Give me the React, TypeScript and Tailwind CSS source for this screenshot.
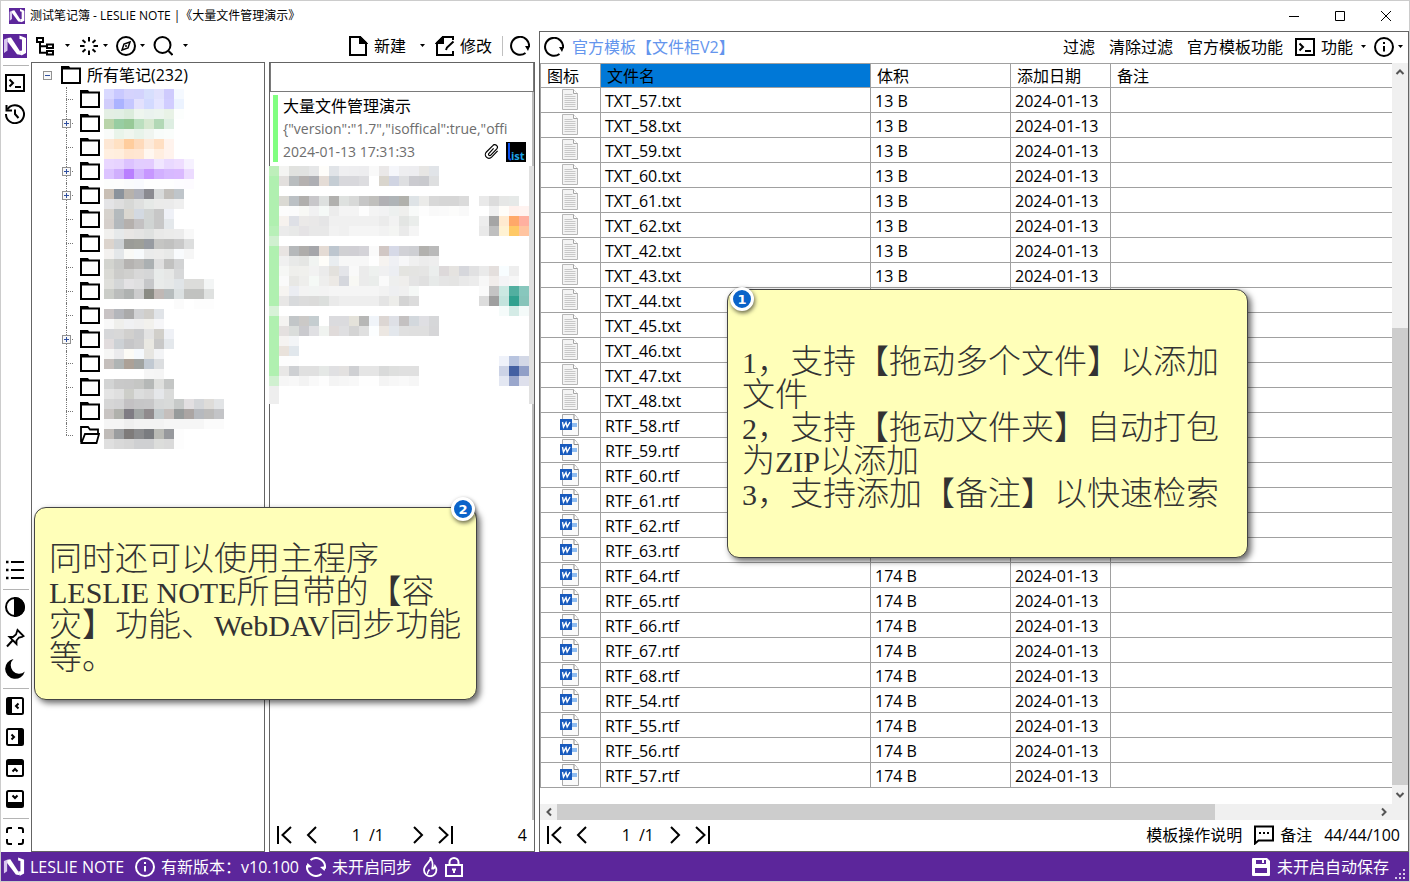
import React, { ReactNode, useState } from 'react';

interface FileRow {
  name: string;
  size?: string;
  date?: string;
}

// Список файлов шаблона
const files: FileRow[] = [
  ...[57, 58, 59, 60, 61, 62, 42, 43].map((id) => ({ name: `TXT_${id}.txt`, size: '13 B', date: '2024-01-13' })),
  ...[44, 45, 46, 47, 48].map((id) => ({ name: `TXT_${id}.txt` })),
  ...[58, 59, 60, 61, 62, 63].map((id) => ({ name: `RTF_${id}.rtf` })),
  ...[64, 65, 66, 67, 68, 54, 55, 56, 57].map((id) => ({ name: `RTF_${id}.rtf`, size: '174 B', date: '2024-01-13' })),
];

// Папки в дереве: какие из них можно раскрыть
const folders = Array.from({ length: 15 }, (_, i) => ({
  id: i,
  expandable: [1, 3, 4, 10].includes(i),
  open: i === 14,
}));

// Строки мозаики: цвета через пробел, "-" пустая клетка, "xN" повтор
const treeMosaic = [
  'd9d9ff c9c9ff d5d3fd d3d3fd d7dffd e1e1fd cfcbfd f5f9ff',
  'd1cdfb abb3ff c5c7ff e3e1fd d3daff e5e5ff d1cdff ecf3ff',
  'e4efe4 e2efe4 dcecdc eef5ee eaf2ee ecf4ee e8f2e6 fcfefd',
  'b9d4a9 98cda2 97c997 bbdfbf d6e8d0 b2d8b6 deeee2',
  'f9fbf9 e9f4ea f0f6ef e8f3ea f0f5f0 f8fcfa fafdfb',
  'fde7d4 ffe1c3 ffcd9d fedabb fdeada ffdfc3 fff3ed',
  'ffefe0 ffeedd ffe5cf ffe6d2 fff7f0 ffeee0 fff3ed',
  'e9d6ff e7d3ff dcc2ff e2cdff e3ccff f0e6ff e9d9ff eeddff f6f1ff',
  'dcc3ff d0affd b97fff d2b3ff c797ff d2b0ff d7b9ff dab9ff ecdbff',
  'fcfdfc fdfdfc fafbfc f9fafe fefefex3 fdfcff fdfbff',
  'c9bfb5 8b939c b7b2ac adafb8 8a8a90 d8dada c2bfbb bfc5ca',
  'e4e4e6 dedede d7d8d6 dfe0df e6e9e7 ebebea ebebeb efefef',
  'd6d2cd b4babd dad7d0 d3d9e1 d1d4d3 c7c7c7 eff1f7',
  'd5cfcb b3b8bc b5b0ad c3c1c2 d0d4d3 c7c7c7 e4e8eb',
  'f1f0ee e6e9ea e8e6e4 e4e4e3 dfe1e0 e9e9e8 ebebea ececec f8f8f8',
  'dcd4cd cdd1d4 9b9c98 9e9f99 979ba1 c5c5c3 c1c1c0 c9c9c9 dddede',
  'f3f1ef e4e7e9 f9f9f6 f7fafc eaebeb ececeb e8e9e8 f9fbfd f6f6f6',
  'd3d4cf c8c9c7 b5b3b1 bcbbb9 abb0b2 dfdfdf c1c1c0 d2d3d4',
  'dadad5 ccccca d0d0ce d8d8d8 d5d6d7 e8ebea e6e7e6 d7d8d9',
  'dfdfdb d4d6d7 e3e2e4 dfdfe0 c6c7c9 e9ebea e6e8e8 e0e4e7 dcdcdax2 f3f5f5',
  'cbcdc8 bbbdbc afb2b1 cccccd 8a8b84 c0b8b5 b6bcbd dbe0e1 c1c2c0x2 dfe1e0',
  '-x7 fbfbfb - fdfdfdx2',
  'c8c3c4 b4b6bb aaaaaa d1d2d4 d0ceca e1e4e8',
  'f8f8f8 efefec f0f1f3 efefef f2f1ed f6f6f8',
  'd6d7d9 d8d8d8 d1d0ce cacbcd e3e3e3 d1cfca eff1f6',
  'e1dcdd cdd1d5 c6c6c8 cccccd e9e8e2 c8c8c8 e4e8ec',
  'f6f6f5 ebebed fcfbf6 f5f9fd e7e6e2 f3f4f6',
  'c5bfbc afb4b4 aca197 a0a3a1 c1c9d2 dcdee0',
  '-x4 f6f6f6 f5f5f5',
  'd3d4d4 c9c9c9 c8c8c8 c5c6c4 b5b8b7 dedfdd c4c6c5',
  'e4e4e4 dfdfdf cdcec9 dcdddd d8d8d8 e5e7ea dadbda',
  'd6d6d6 d3d3d4 c3c1c3 c6c6c7 c7c7c8 d6d8d8 d8dad9 c7cac9 e2dfe1 d4d6d9 dedcd9 e2e4e6',
  'c8c4c2 b0b1ac 7f7c83 a1a5a4 908b8d c3cacc c5bfbc 979b9b aba5a3 b6b9be bcbbba c3c4c7',
  'f5f5f5x2 efefef f3f3f3x3 f6f6f6x4 fbfbfbx2',
  'bfbbb8 9b9d9f 7e7b7a 8a8b8d 7a7c80 b9bab5 97999d fdfdfd',
  'dfdfdf d9d9d9 d6d6d6 cfd0d2x2 dcdddb dadada fdfdfd',
];

const listMosaic = [
  'beefbb f4f4f2 e1e2df e1e2e1 e6e7e8 fefdfa e1e4e8 efeff1 eeeef0 ededef f9f9f9 eae8e8 f5f6fa eeeef0 ededf0 e7e6e4 e1e4e8',
  'b0f0b0 e2dfdd b9bdbf b5b1b0 aeafb4 e4dcd6 c5cdd4 d8d8dcx2 dddde0 - d9d5cd d0d4e2 dedfe1 cbcbd0 c9cace dedfe0',
  'b0f0b0',
  'b0f0b0 dad9d3 bbc0c4 b1afad c8c7ca dde0df b1b0ae dee1df d8d9d8 c6c6c6 c0bfbc b1b0b4 afb4b7 b1b1ac dee3e6 ebebe9 d8d8d8 d6d6d6x2 dbdbdb - e9e9e9 dcdcdc e6e7e6 e6e9e8',
  'b0f0b0 fcfcfc fbfbfb f8f8f5 f1f1f2 f5f9f7 ececec f4f4f4x2 fdfdfd f4f4f4 f2f2f3 edf0ef efefed f8faf9 fdfdfd f9f9f9 fafafa fcfcfb f9f9f9 -x2 f0f0f0 fffdf9 fff1ed fff3f0',
  'b0f0b0 f6f2ee dee0e6 ebe9e8 e9e8e8 e5e5e6 f0f0f0x5 ebebeb f2f2f2 e3e5e3 eaedeb -x6 ededed a5a5a5 ffead0 ffa869 ffb0a0',
  'b8f0b8 ebebeb e8e9e8 e5e3e5 e8e8e8x2 f2f2f2 f0f0f0 f5f5f5x3 f2f2f2 f4f5f3 eaeaea f5f5f5 -x6 e9e9e9 bfbfbf fff2d3 ffc966 ffc4a0',
  'd0f0d0',
  'b0f0b0 e8e4e2 b5b8ba afadab a5a6aa e4dbd4 bdc6cf d0d0d3 d0cfd4 d4d3d8 fafafa d1c7c4 d6d9e7 d1d1d6 cecfd3 b2b1ae bababa',
  'b0f0b0 f0f0f0 e8e9e8 e5e6e4 f1f4f2 fefdf9 e9edf0 f7f7f7x3 fefefe f6f3f0 eff0f4 f7f7f8 f0f0f0 ececec eeeeee',
  'b0f0b0 f6f7f5 efefec f0f0ed f2f2f2 ebebeb e3e1dd e4e5e9 f9f9f9 ebebeb eef1ef f0f0f1 eceef2 e4e4e0 e4e4e2 e5e5e4 ebeeed ddd9da e5e3e0 d6d7dc e1e1e2 eaeaea e4dfdd f8fdff eeeeee',
  'b0f0b0 fafafa e8e8e5 eeeeec f5f9f6 eeeeed ece9e5 d5d7dd f8f8f4 ebebeb eaedeb fafafa eeefee efeeec e4e4e4 e0e0e0 e7eae9 e5e5e5 e4e4e3 e9e9e9 ececec f7f7f7 f1edeb f4f4f6 f7f7f7',
  'b0f0b0 f6f4f1 ebedf2 f3f3f3 f2f4f3 f3f3f3 f5f5f5x5 f2f2f2 eeeff1 f0f0f0 f5f8f6 -x6 fafafa c4c4c4 cbe8e2 52afa0 88c7bd',
  'b0f0b0 e8e7e6 d8dadc dcdcdc dbdbda dcdfdd eaeaea eeeeeex4 e4e4e4 ededea d4d4d4 dcdcdc -x6 dcdcdc 9f9f9f c3e3dd 31a18f 87c4ba',
  'd8f2d8 -x22 f5fbfa d4ebe6 f4faf9',
  'b0f0b0 f4f3f1 c2c6c8 cbc9c7 c5cdd0 - dbdbdex2 e4e2da b7b7b6 f0f4f9 dcd6d3 dee0e6 c4c1c1 d3d8dd dfdfe3 d6d7d9',
  'b0f0b0 e4e0df dadddb cacace e0e0e3 f0f3f0 e0dbda dfdfe1 d4d4d4 e0e0e0 fcfeff ece7e2 e3e7ec e0e0e0 dfdfdfx2 d6d6d8',
  'b0f0b0 f5f3f1 f3f5f7',
  'b0f0b0 e9e2db e1e7ec',
  'b0f0b0 fdfdfdx2 -x20 eff2fa b8c4df d3d8e6',
  'b0f0b0 e8e7e6 ced0d3 e0e0e0x2 e5e8e6 e0e0e2 e3e1e0 cfd0d3 e5e5e5x2 d9dada dedfde e0e0e0x2 -x8 ccd3e6 4360a2 919fc7',
  'd0f0d0 f6f6f6 f8f8f8 f3f3f3 f9f9f9 fdfdfd f4f4f4 f6f6f6 f8f8f8 fefefex2 f4f4f4 f7f7f7 f9f9f9 f6f6f6 -x8 e3e7f2 9aa7cc dee0ec',
  'eeeeee',
  'eeeeee',
];

const expandRow = (row: string) =>
  row.split(' ').flatMap((token) => {
    const [color, count] = token.split('x');
    return Array(Number(count || 1)).fill(color) as string[];
  });

const Mosaic: React.FC<{ rows: string[]; cols: number }> = ({ rows, cols }) => (
  <svg width={cols * 10} height={rows.length * 10} shapeRendering="crispEdges" aria-hidden="true">
    {rows.map((row, y) =>
      expandRow(row).map((color, x) =>
        color === '-' ? null : (
          <rect key={`${x}-${y}`} x={x * 10} y={y * 10} width="10" height="10" fill={`#${color}`} />
        )
      )
    )}
  </svg>
);

// Базовая обёртка для контурных иконок 20x20
const Svg: React.FC<{ children: ReactNode; size?: number }> = ({ children, size = 20 }) => (
  <svg
    width={size}
    height={size}
    viewBox="0 0 20 20"
    fill="none"
    stroke="currentColor"
    strokeWidth="2"
    className="shrink-0"
    aria-hidden="true"
  >
    {children}
  </svg>
);

const Logo: React.FC<{ size: number; plain?: boolean }> = ({ size, plain }) => (
  <svg width={size} height={size} viewBox="0 0 24 24" className="shrink-0" aria-hidden="true">
    {!plain && <rect width="24" height="24" fill="#5c269b" />}
    <path d="M1 5.500 4.500 4v12.500L1 19z" fill="#d9c8ee" />
    <path d="M4.500 4 8 3.500l8.500 13 2 4.500-4.500-.8L4.500 7.500z" fill="#fff" />
    <path d="M16.500 1.500 23 4v15l-4.500 2.500-2-4.500 2.500-.5V5.500l-2.500-.5z" fill="#fff" />
  </svg>
);

const TreeIcon = () => (
  <Svg>
    <path d="M2 2h6v4H2zM12 8.500h6v3.500h-6zM12 15h6v3.500h-6zM5 6v10.800h7M5 10.300h7" />
  </Svg>
);

const SparkIcon = () => (
  <Svg>
    <path d="M10 1v4.500M10 14.500V19M1 10h4.500M14.500 10H19M3.500 4l3 2.700M16.500 4l-3 2.700M3.500 16l3-2.700M16.500 16l-3-2.700" />
  </Svg>
);

const CompassIcon = () => (
  <Svg>
    <circle cx="10" cy="10" r="9" />
    <path d="M14 6 12 12 6 14 8 8z" strokeWidth="1.500" />
    <circle cx="10" cy="10" r="1" fill="currentColor" stroke="none" />
  </Svg>
);

const SearchIcon = () => (
  <Svg>
    <circle cx="9.500" cy="9" r="8" />
    <path d="M15.500 15l4 4" />
  </Svg>
);

const NewDocIcon = () => (
  <Svg>
    <path d="M2 1h10l6 6v12H2z" />
    <path d="M12 1v6h6z" fill="currentColor" />
  </Svg>
);

const EditDocIcon = () => (
  <Svg>
    <path d="M18 4V1H8L2 7v12h16v-4" />
    <path d="M8 1v6H2z" fill="currentColor" />
    <path d="M11 14l1-2.500L18.500 5.500" />
  </Svg>
);

const RefreshIcon = () => (
  <Svg>
    <path d="M15.500 17A9 9 0 1 1 19 11" />
    <path d="M15 10h5l-2 5z" fill="currentColor" stroke="none" />
  </Svg>
);

const TerminalIcon = () => (
  <Svg>
    <path d="M1 2h18v16H1z" />
    <path d="M4.500 6.500 8 10l-3.500 3.500M10 14h6" />
  </Svg>
);

const HistoryIcon = () => (
  <Svg>
    <path d="M2.300 5.500A9 9 0 1 1 1 10" />
    <path d="M1.500 1v5.500H7M10 5.500V10l3.500 4" />
  </Svg>
);

const InfoIcon = () => (
  <Svg>
    <circle cx="10" cy="10" r="9" />
    <path d="M10 9v5.500M10 5v2" />
  </Svg>
);

const ListIcon = () => (
  <Svg>
    <path d="M6 2h13M6 10h13M6 18h13" />
    <path d="M1 2h2.500M1 10h2.500M1 18h2.500" strokeWidth="2.500" />
  </Svg>
);

const ContrastIcon = () => (
  <Svg>
    <circle cx="10" cy="10" r="9" />
    <path d="M10 1a9 9 0 0 1 0 18z" fill="currentColor" />
  </Svg>
);

const PinIcon = () => (
  <Svg>
    <path d="M12.500 2 18.500 8l-1.500.8-3 .7-2.500 3v3.500L4.500 9H8l3-2.500z" strokeWidth="1.800" />
    <path d="M7.500 12.500 2 18.500" />
  </Svg>
);

const MoonIcon = () => (
  <Svg>
    <path d="M8.500 0a10 10 0 1 0 11.300 12.500A8.300 8.300 0 0 1 8.500 0z" fill="currentColor" stroke="none" />
  </Svg>
);

// Иконка скрытия панели: закрашенная сторона и стрелка
const PanelIcon: React.FC<{ bar: string; arrow: string }> = ({ bar, arrow }) => (
  <Svg>
    <rect x="2" y="2" width="16" height="16" rx="1.500" />
    <path d={bar} fill="currentColor" stroke="none" />
    <path d={arrow} />
  </Svg>
);

const FullscreenIcon = () => (
  <Svg>
    <path d="M2 7V4q0-2 2-2h3M13 2h3q2 0 2 2v3M18 13v3q0 2-2 2h-3M7 18H4q-2 0-2-2v-3" />
  </Svg>
);

const SyncIcon = () => (
  <Svg>
    <path d="M15.500 17A9 9 0 0 1 1.100 8.500M4.500 3A9 9 0 0 1 18.900 11.500" />
    <path d="M0 11l1.500-5L6 10zM20 9l-1.500 5L14 10z" fill="currentColor" stroke="none" />
  </Svg>
);

const FlameIcon = () => (
  <Svg>
    <path d="M10.500 1c.5 3.500-6.500 7-6.500 12a6.200 6.200 0 0 0 12.400 0c0-1.800-.6-3-1.400-4-.5 2-2 2.800-2.800 2.600C13 8 12.500 3 10.500 1z" strokeWidth="1.800" />
    <path d="M7.500 17.500c-.5-2.500 1-3.500 2-5" strokeWidth="1.500" />
  </Svg>
);

const LockIcon = () => (
  <Svg>
    <path d="M2 8h16v11H2zM5.500 8V5.500a4.500 4.500 0 0 1 9 0V8" />
    <path d="M8 11.500h4v2h-1V16H9v-2.500H8z" fill="currentColor" stroke="none" />
  </Svg>
);

const SaveIcon = () => (
  <Svg>
    <path d="M1 2q0-1 1-1h14l3 3v14q0 1-1 1H2q-1 0-1-1z" fill="currentColor" stroke="none" />
    <path d="M5 3h10v4H5zM4 11h12v5H4z" fill="#5c269b" stroke="none" />
    <path d="M11 3h2v3h-2z" fill="#fff" stroke="none" />
  </Svg>
);

const CommentIcon = () => (
  <Svg>
    <path d="M1 1.500h18v14H4.500L1 18.500z" />
    <path d="M5 8h2M9 8h2M13 8h2" />
  </Svg>
);

const FolderIcon: React.FC<{ open?: boolean }> = ({ open }) => (
  <Svg>
    {open ? (
      <path d="M1 17.500V2h7l2 2.500h8V8M1.500 18 5 9h14l-2.500 9z" strokeWidth="1.800" />
    ) : (
      <>
        <path d="M1 3.500h18V18H1z" />
        <path d="M0 1h8l2 3H0z" fill="currentColor" stroke="none" />
      </>
    )}
  </Svg>
);

const ClipIcon = () => (
  <Svg size={16}>
    <path
      d="M17 8.500l-7.500 8A4.500 4.500 0 0 1 3 10l8-8a3 3 0 0 1 5 4l-7.500 8a1.500 1.500 0 0 1-2.500-2l6-6.500"
      strokeWidth="1.500"
    />
  </Svg>
);

const TxtFileIcon = () => (
  <svg width="16" height="22" viewBox="0 0 16 22" className="mx-auto" aria-hidden="true">
    <path d="M.5 1.500h11l4 4v16h-15z" fill="#f4f4f4" stroke="#b8b8b8" />
    <path d="M11.500 1.500v4h4" fill="#fff" stroke="#a5a5a5" />
    <path d="M2.500 6.500h8M2.500 8.500h11M2.500 10.500h11M2.500 12.500h11M2.500 14.500h11M2.500 16.500h11M2.500 18.500h11" stroke="#c8c8c8" />
  </svg>
);

const RtfFileIcon = () => (
  <svg width="20" height="23" viewBox="0 0 20 23" className="mx-auto" aria-hidden="true">
    <path d="M2.500 1.500h12l4 5v16h-16z" fill="#fafafa" stroke="#a8a8a8" />
    <path d="M14 1.500v5h4.500" fill="#fff" stroke="#8c8c8c" />
    <path d="M12 10h5v4h-5z" fill="#8fbcf0" />
    <path d="M0 6h12v11H0z" fill="#185abd" />
    <path d="M2.500 9l1 5L6 9.500 7.200 14l2.800-5" fill="none" stroke="#fff" strokeWidth="1.400" />
  </svg>
);

const Caret = () => (
  <svg width="5" height="3" viewBox="0 0 5 3" className="shrink-0" aria-hidden="true">
    <path d="M0 0h5L2.500 3z" fill="currentColor" />
  </svg>
);

const Arrow: React.FC<{ d: string }> = ({ d }) => (
  <svg width="16" height="20" viewBox="0 0 16 20" fill="none" stroke="currentColor" strokeWidth="2" aria-hidden="true">
    <path d={d} />
  </svg>
);

const SmallArrow: React.FC<{ d: string }> = ({ d }) => (
  <svg width="10" height="10" viewBox="0 0 10 10" fill="none" stroke="#555" strokeWidth="2" aria-hidden="true">
    <path d={d} />
  </svg>
);

const SideButton: React.FC<{ label: string; children: ReactNode }> = ({ label, children }) => (
  <button type="button" aria-label={label} className="flex h-[31px] w-full items-center justify-center pr-[2px] pb-[2px]">
    {children}
  </button>
);

const SideDivider = () => (
  <div className="flex h-[6px] items-center px-[2px]">
    <div className="h-px w-full bg-[#b4b4b4]" />
  </div>
);

const Pager: React.FC<{ id: string; totalClass: string; children: ReactNode }> = ({ id, totalClass, children }) => {
  const [page, setPage] = useState('1');

  return (
    <div className="flex h-[31px] shrink-0 items-center pb-[2px] pl-[6px]">
      <button type="button" aria-label="首页">
        <Arrow d="M2 1v18M15 2 6.500 10 15 18" />
      </button>
      <button type="button" aria-label="上一页" className="ml-3">
        <Arrow d="M12 2 4 10l8 8" />
      </button>
      <input
        id={id}
        aria-label="页码"
        value={page}
        onChange={(e) => setPage(e.target.value)}
        className="ml-4 w-[25px] bg-transparent text-right outline-none"
      />
      <span className={totalClass}>/1</span>
      <button type="button" aria-label="下一页">
        <Arrow d="M4 2l8 8-8 8" />
      </button>
      <button type="button" aria-label="末页" className="ml-3">
        <Arrow d="M1 2 9.500 10 1 18M14 1v18" />
      </button>
      {children}
    </div>
  );
};

const Expander: React.FC<{ expanded?: boolean }> = ({ expanded }) => (
  <button type="button" aria-label={expanded ? '折叠' : '展开'} className="block bg-white">
    <svg width="9" height="9" viewBox="0 0 9 9" fill="none" className="block" aria-hidden="true">
      <rect x=".5" y=".5" width="8" height="8" fill="#f8f8f8" stroke="#919191" />
      <path d={expanded ? 'M2 4.500h5' : 'M2 4.500h5M4.500 2v5'} stroke="#3050a0" />
    </svg>
  </button>
);

// Жёлтая выноска с номером
const Callout: React.FC<{ className: string; badgeClass: string; number: number; lines: ReactNode[] }> = ({
  className,
  badgeClass,
  number,
  lines,
}) => (
  <aside
    className={`absolute z-10 flex items-center rounded-[12px] border border-[#444] bg-[#ffffb9] px-[14px] pt-[10px] font-['Liberation_Serif','Noto_Sans_CJK_SC',serif] text-[33px] leading-[33px] font-light text-[#333] shadow-[3px_3px_6px_rgba(0,0,0,0.6)] ${className}`}
  >
    <span
      className={`absolute flex size-6 items-center justify-center rounded-full border-[3px] border-white bg-[#0a63c9] font-['DejaVu_Sans',sans-serif] text-[13px] leading-none font-bold text-white shadow-[1px_2px_4px_rgba(0,0,0,0.6)] ${badgeClass}`}
    >
      {number}
    </span>
    <div className="whitespace-nowrap">
      {lines.map((line, i) => (
        <p key={i} className="h-[33px]">{line}</p>
      ))}
    </div>
  </aside>
);

const Latin: React.FC<{ children: ReactNode }> = ({ children }) => (
  <span className="text-[30px] leading-none">{children}</span>
);

const Sidebar = () => (
  <nav className="flex w-[30px] shrink-0 flex-col">
    <SideButton label="主菜单">
      <Logo size={24} />
    </SideButton>
    <SideDivider />
    <SideButton label="终端"><TerminalIcon /></SideButton>
    <SideButton label="历史"><HistoryIcon /></SideButton>
    <div className="flex-1" />
    <SideButton label="列表"><ListIcon /></SideButton>
    <SideDivider />
    <SideButton label="对比度"><ContrastIcon /></SideButton>
    <SideButton label="置顶"><PinIcon /></SideButton>
    <SideButton label="夜间模式"><MoonIcon /></SideButton>
    <SideDivider />
    <SideButton label="左侧面板"><PanelIcon bar="M2 2h5v16H2z" arrow="M13.500 7.500 11 10l2.500 2.500" /></SideButton>
    <SideButton label="右侧面板"><PanelIcon bar="M13 2h5v16h-5z" arrow="M6.500 7.500 9 10l-2.500 2.500" /></SideButton>
    <SideButton label="顶部面板"><PanelIcon bar="M2 2h16v5H2z" arrow="M7.500 13.500 10 11l2.500 2.500" /></SideButton>
    <SideButton label="底部面板"><PanelIcon bar="M2 13h16v5H2z" arrow="M7.500 6.500 10 9l2.500-2.500" /></SideButton>
    <SideDivider />
    <SideButton label="全屏"><FullscreenIcon /></SideButton>
  </nav>
);

const NotesToolbar = () => (
  <div className="flex h-[31px] shrink-0 items-center pr-[5px] pb-[2px] pl-1">
    <button type="button" aria-label="目录" className="flex items-center gap-[10px]"><TreeIcon /><Caret /></button>
    <button type="button" aria-label="工具" className="ml-[9px] flex items-center gap-1"><SparkIcon /><Caret /></button>
    <button type="button" aria-label="导航" className="ml-2 flex items-center gap-1"><CompassIcon /><Caret /></button>
    <button type="button" aria-label="搜索" className="ml-2 flex items-center gap-[10px]"><SearchIcon /><Caret /></button>
    <button type="button" className="ml-auto flex items-center gap-[6px]"><NewDocIcon />新建</button>
    <button type="button" aria-label="新建选项" className="ml-[14px] flex h-5 items-center"><Caret /></button>
    <button type="button" className="ml-[10px] flex items-center gap-[5px]"><EditDocIcon />修改</button>
    <div className="ml-[10px] h-5 w-px bg-[#c0c0c0]" />
    <button type="button" aria-label="刷新" className="ml-[7px]"><RefreshIcon /></button>
  </div>
);

const TreePanel = () => (
  <div className="relative w-[234px] shrink-0 border border-[#646464]">
    <div className="flex h-6 items-center pl-[11px]">
      <Expander expanded />
      <span className="ml-[9px]"><FolderIcon /></span>
      <span className="ml-[6px]">所有笔记(232)</span>
    </div>
    <ul>
      {folders.map((folder) => (
        <li key={folder.id} className="relative flex h-6 items-center pl-12">
          <span
            className={`absolute top-0 left-[34px] border-l border-dotted border-[#777] ${folder.open ? 'h-3' : 'h-6'}`}
          />
          <span className="absolute top-3 left-[34px] w-[7px] border-t border-dotted border-[#777]" />
          {folder.expandable && (
            <span className="absolute top-2 left-[30px]"><Expander /></span>
          )}
          <FolderIcon open={folder.open} />
        </li>
      ))}
    </ul>
    <div className="absolute top-[26px] left-[72px]">
      <Mosaic rows={treeMosaic} cols={12} />
    </div>
  </div>
);

const NoteList = () => (
  <div className="flex w-[266px] shrink-0 flex-col border border-[#646464]">
    <input
      aria-label="搜索笔记"
      className="h-[29px] w-full shrink-0 border border-t-0 border-[#7a7a7a] px-2 outline-none"
    />
    <div className="relative flex-1 border-r-2 border-[#bdbdbd]">
      <article className="mx-[3px] mt-[3px] flex h-[67px] border-l-[5px] border-[#80ff80] pl-[5px]">
        <div className="min-w-0 flex-1">
          <h2 className="h-[22px] leading-[22px]">大量文件管理演示</h2>
          <p className="h-6 overflow-hidden text-sm leading-6 whitespace-nowrap text-[#6d6d6d]">
            {'{"version":"1.7","isoffical":true,"offi'}
          </p>
          <div className="flex h-[21px] items-center text-sm text-[#6d6d6d]">
            <time className="flex-1">2024-01-13 17:31:33</time>
            <span className="text-black"><ClipIcon /></span>
            <svg width="20" height="20" viewBox="0 0 20 20" className="mr-[3px] ml-[6px]" aria-hidden="true">
              <rect width="20" height="20" fill="#000" />
              <path d="M3 1v15q0 1.500 2 1.500" fill="none" stroke="#0a50f0" strokeWidth="2" />
              <text x="5" y="18" fontSize="11" fontWeight="bold" fontFamily="Open Sans" fill="#1fa5e8">ist</text>
            </svg>
          </div>
        </div>
      </article>
      <div className="absolute top-[74px] -left-px flex h-[238px] w-[265px] overflow-hidden bg-white">
        <Mosaic rows={listMosaic} cols={26} />
        <div className="flex-1 bg-[#e1e1e1]" />
      </div>
    </div>
    <Pager id="notes-page" totalClass="ml-2 w-[41px]">
      <span className="ml-auto pr-[7px]">4</span>
    </Pager>
  </div>
);

const cellClass = 'h-[25px] border-r border-b border-[#a0a0a0] p-0 pt-[2px] pl-1 leading-[22px]';
const headClass =
  'h-[25px] border-t border-r border-b border-[#a0a0a0] p-0 pt-[2px] pl-[6px] text-left leading-[21px] font-normal';

const FileTable = () => (
  <table className="w-full table-fixed border-separate border-spacing-0 border-l border-[#a0a0a0]">
    <colgroup>
      <col className="w-[60px]" />
      <col className="w-[270px]" />
      <col className="w-[140px]" />
      <col className="w-[100px]" />
      <col />
    </colgroup>
    <thead>
      <tr>
        <th className={headClass}>图标</th>
        <th className={`${headClass} bg-[#0078d7]`}>文件名</th>
        <th className={headClass}>体积</th>
        <th className={headClass}>添加日期</th>
        <th className={`${headClass} border-r-0`}>备注</th>
      </tr>
    </thead>
    <tbody>
      {files.map((file) => (
        <tr key={file.name}>
          <td className="h-[25px] border-r border-b border-[#a0a0a0] p-0 pr-px align-top">
            {file.name.endsWith('.txt') ? <TxtFileIcon /> : <RtfFileIcon />}
          </td>
          <td className={cellClass}>{file.name}</td>
          <td className={cellClass}>{file.size}</td>
          <td className={cellClass}>{file.date}</td>
          <td className={`${cellClass} border-r-0`} />
        </tr>
      ))}
    </tbody>
  </table>
);

const FilePanel = () => (
  <section className="flex min-w-0 flex-1 flex-col border border-[#646464]">
    <div className="flex h-[31px] shrink-0 items-center pr-[5px] pb-[2px] pl-1">
      <button type="button" aria-label="刷新"><RefreshIcon /></button>
      <h1 className="ml-2 flex-1 text-[#6495ed]">官方模板【文件柜V2】</h1>
      <button type="button">过滤</button>
      <button type="button" className="ml-[14px]">清除过滤</button>
      <button type="button" className="ml-[14px]">官方模板功能</button>
      <button type="button" className="ml-3 flex items-center gap-[6px]"><TerminalIcon />功能</button>
      <button type="button" aria-label="功能选项" className="ml-2 flex h-5 items-center"><Caret /></button>
      <button type="button" aria-label="信息" className="ml-2 flex items-center gap-1"><InfoIcon /><Caret /></button>
    </div>
    <div className="flex min-h-0 flex-1">
      <div className="min-w-0 flex-1 overflow-hidden">
        <FileTable />
      </div>
      <div className="flex w-4 shrink-0 flex-col items-center bg-[#f0f0f0]">
        <div className="flex h-[17px] items-center"><SmallArrow d="M1.500 7 5 3.500 8.500 7" /></div>
        <div className="grow-[248]" />
        <div className="w-full grow-[457] bg-[#cdcdcd]" />
        <div className="flex h-[19px] items-center"><SmallArrow d="M1.500 3 5 6.500 8.500 3" /></div>
      </div>
    </div>
    <div className="flex h-4 shrink-0 bg-[#f0f0f0] pr-4">
      <div className="flex w-[17px] items-center justify-center"><SmallArrow d="M7 1.500 3.500 5 7 8.500" /></div>
      <div className="grow-[658] bg-[#cdcdcd]" />
      <div className="grow-[160]" />
      <div className="flex w-[17px] items-center justify-center"><SmallArrow d="M3 1.500 6.500 5 3 8.500" /></div>
    </div>
    <Pager id="files-page" totalClass="ml-2 w-7">
      <a href="#help" className="ml-auto">模板操作说明</a>
      <button type="button" className="ml-3 flex items-center gap-[6px]"><CommentIcon />备注</button>
      <span className="ml-3 pr-2">44/44/100</span>
    </Pager>
  </section>
);

const App: React.FC = () => {
  return (
    <div className="relative flex h-screen flex-col overflow-hidden border border-[#ccc] bg-white font-['Open_Sans','Noto_Sans_CJK_SC',sans-serif] text-base leading-6 text-black">
      <header className="flex h-[30px] shrink-0 items-center pl-2 text-xs">
        <Logo size={16} />
        <span className="ml-[5px] flex-1">测试笔记簿 - LESLIE NOTE |《大量文件管理演示》</span>
        <button type="button" aria-label="最小化" className="flex w-[46px] justify-center">
          <svg width="10" height="10" stroke="#000" fill="none"><path d="M0 5.500h10" /></svg>
        </button>
        <button type="button" aria-label="最大化" className="flex w-[46px] justify-center">
          <svg width="10" height="10" stroke="#000" fill="none"><path d="M.5.5h9v9h-9z" /></svg>
        </button>
        <button type="button" aria-label="关闭" className="flex w-[46px] justify-center">
          <svg width="10" height="10" stroke="#000" fill="none"><path d="M0 0l10 10M10 0 0 10" /></svg>
        </button>
      </header>

      <main className="flex min-h-0 flex-1">
        <Sidebar />
        <div className="mr-1 flex shrink-0 flex-col">
          <NotesToolbar />
          <div className="flex min-h-0 flex-1 gap-1">
            <TreePanel />
            <NoteList />
          </div>
        </div>
        <FilePanel />
      </main>

      {/* Строка состояния */}
      <footer className="flex h-[29px] shrink-0 items-center bg-[#5c269b] pl-[2px] text-white">
        <Logo size={22} plain />
        <span className="ml-[5px]">LESLIE NOTE</span>
        <button type="button" className="ml-[11px] flex items-center gap-[6px]"><InfoIcon />有新版本：v10.100</button>
        <button type="button" className="ml-[7px] flex items-center gap-[6px]"><SyncIcon />未开启同步</button>
        <button type="button" aria-label="热度" className="ml-2"><FlameIcon /></button>
        <button type="button" aria-label="锁定" className="ml-1"><LockIcon /></button>
        <button type="button" className="ml-auto flex items-center gap-[6px]"><SaveIcon />未开启自动保存</button>
        <svg width="12" height="12" viewBox="0 0 12 12" className="mr-[2px] ml-[6px] self-end" fill="#d8cbe8" aria-hidden="true">
          <path d="M8 0h2v2H8zM4 4h2v2H4zM8 4h2v2H8zM0 8h2v2H0zM4 8h2v2H4zM8 8h2v2H8z" />
        </svg>
      </footer>

      <Callout
        number={1}
        className="top-[288px] left-[726px] h-[269px] w-[521px]"
        badgeClass="-top-[3px] left-[2px]"
        lines={[
          <><Latin>1</Latin>，支持【拖动多个文件】以添加</>,
          '文件',
          <><Latin>2</Latin>，支持【拖动文件夹】自动打包</>,
          <>为<Latin>ZIP</Latin>以添加</>,
          <><Latin>3</Latin>，支持添加【备注】以快速检索</>,
        ]}
      />
      <Callout
        number={2}
        className="top-[506px] left-[33px] h-[193px] w-[443px]"
        badgeClass="-top-[11px] right-[1px]"
        lines={[
          '同时还可以使用主程序',
          <><Latin>LESLIE NOTE</Latin>所自带的【容</>,
          <>灾】功能、<Latin>WebDAV</Latin>同步功能</>,
          '等。',
        ]}
      />
    </div>
  );
};

export default App;
